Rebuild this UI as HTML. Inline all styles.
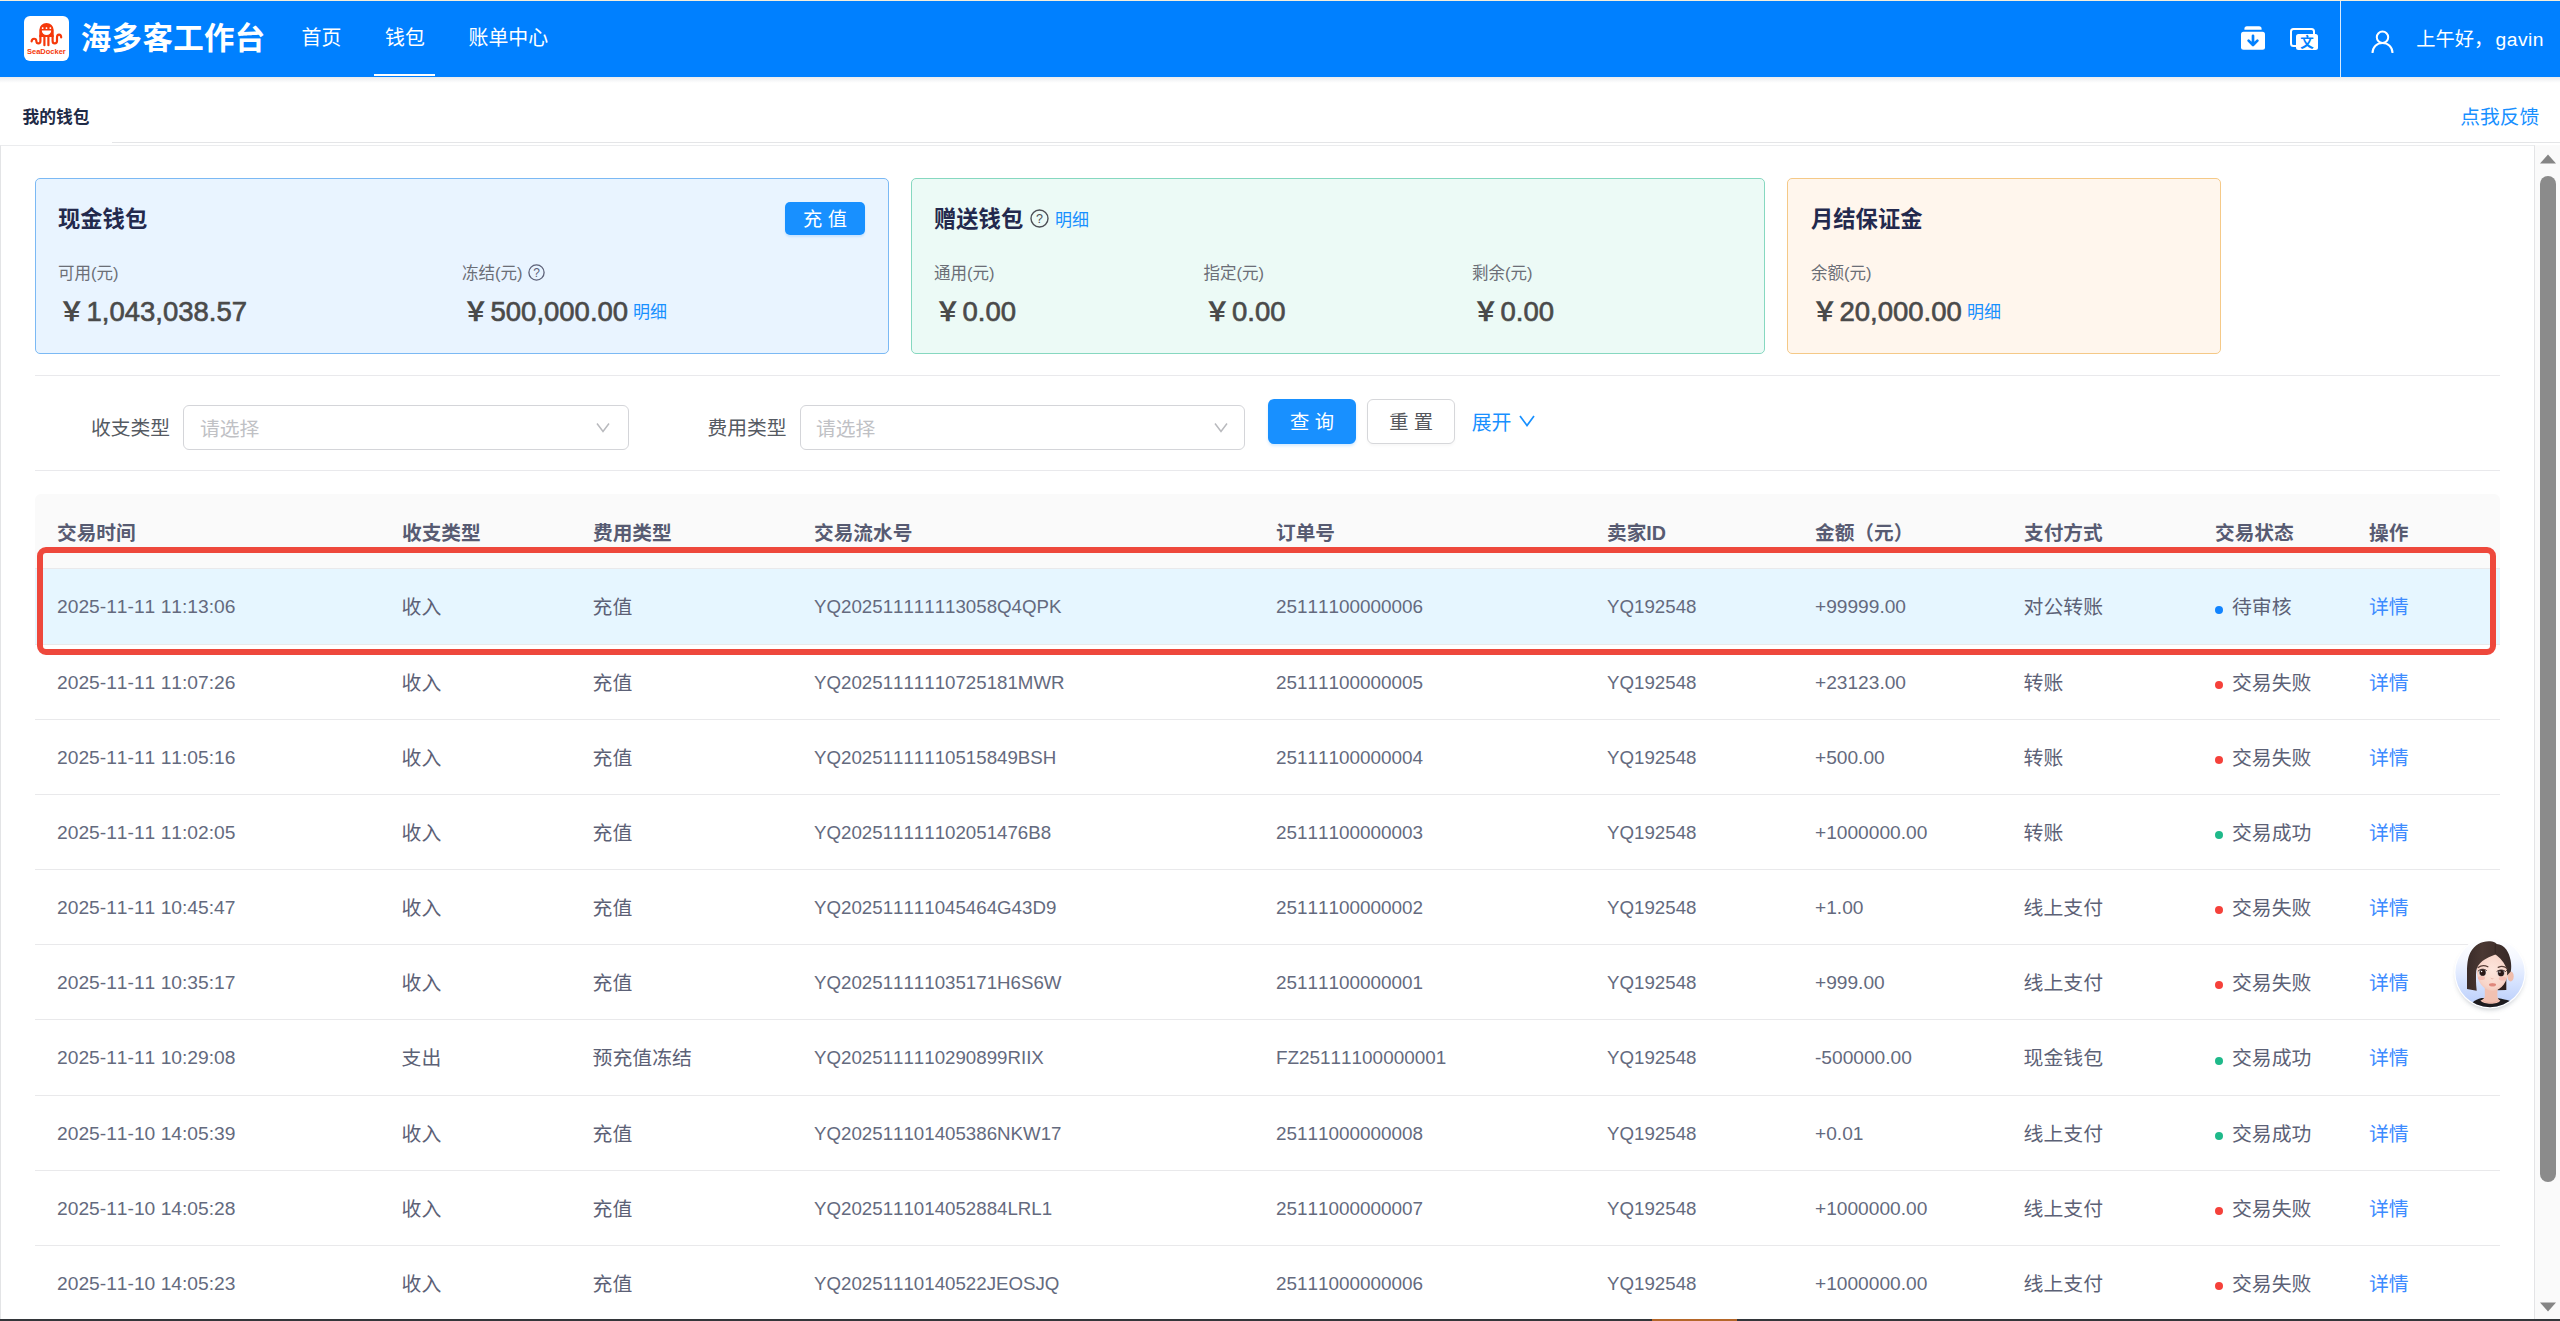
<!DOCTYPE html>
<html lang="zh-CN">
<head>
<meta charset="utf-8">
<title>海多客工作台 - 我的钱包</title>
<style>
html,body{margin:0;padding:0;width:2560px;height:1321px;overflow:hidden;background:#fff}
body{position:relative;font-family:"Liberation Sans","Noto Sans CJK SC",sans-serif;color:#5f6472;font-size:19.25px}
body div,body span{position:absolute;white-space:nowrap;box-sizing:border-box}
span.i{position:static}
svg{position:absolute;overflow:visible}
/* header */
.topstrip{left:0;top:0;width:2560px;height:1px;background:#f4eedc}
.hdr{left:0;top:1px;width:2560px;height:75.600px;background:#0080ff}
.hdrshadow{left:0;top:76.500px;width:2560px;height:6px;background:linear-gradient(#e9ebee,#ffffff)}
.logo{left:24px;top:16px;width:45px;height:45px;background:#fff;border-radius:6px}
.brand{left:80.800px;top:17.800px;height:40px;line-height:40px;font-size:30.500px;font-weight:bold;color:#fff;letter-spacing:0.300px}
.nav{top:22.800px;height:30px;line-height:30px;font-size:19.900px;color:#fff}
.navline{left:374px;top:73.5px;width:61px;height:2.5px;background:#fff}
.vdiv{left:2340px;top:1px;width:1.200px;height:75.500px;background:#d6e9fd}
.hello{left:2416.200px;top:25px;height:30px;line-height:30px;font-size:19.25px;color:#fff}
/* breadcrumb */
.crumb{left:22.500px;top:106px;height:24px;line-height:24px;font-size:16.750px;font-weight:bold;color:#1f2b47}
.fb{left:2460.300px;top:103px;height:28px;line-height:28px;font-size:19.750px;color:#1890ff}
.crumbline{left:112px;top:142px;width:2448px;height:1px;background:#e4e5e7}
.panel{left:0;top:144.500px;width:2535px;height:1176px;border-left:1.5px solid #e3e4e6;border-top:1px solid #ebecee;border-right:1px solid #e3e4e6}
/* cards */
.card{top:178px;height:176px;border-radius:5px;border:1.5px solid}
.c1{left:35px;width:854px;background:#e9f4ff;border-color:#7bb9f4}
.c2{left:911px;width:854px;background:#ecfaf6;border-color:#86d8c0}
.c3{left:1787px;width:434px;background:#fff6ed;border-color:#f5c987}
.ctitle{top:205.300px;height:30px;line-height:30px;font-size:22.300px;font-weight:bold;color:#23294d}
.clabel{top:261.300px;height:24px;line-height:24px;font-size:16.5px;color:#6b6e76}
.cval{top:292.800px;height:38px;line-height:38px;font-size:27.500px;color:#4a4a4a;font-weight:normal;-webkit-text-stroke:0.650px #4a4a4a}
span.y{font-weight:bold;-webkit-text-stroke:0;font-size:26.500px;letter-spacing:-0.500px;margin-left:-0.500px;margin-right:2px}
.mx{height:24px;line-height:24px;font-size:17px;color:#1890ff}
.btnr{left:785px;top:202px;width:80px;height:33px;line-height:35px;background:#1890ff;border-radius:5px;color:#fff;font-size:19.25px;text-align:center;box-shadow:0 2px 2px rgba(24,144,255,.15)}
/* filter */
.hline{left:35px;width:2465px;height:1.200px;background:#e9e9ec}
.flabel{top:413px;height:30px;line-height:30px;font-size:19.800px;color:#555a62}
.sel{top:405px;height:45px;width:446px;border:1.5px solid #d4d5d9;border-radius:6px;background:#fff}
.ph{top:413.500px;height:30px;line-height:30px;font-size:19.800px;color:#c0c1c5}
.bq{left:1268px;top:399px;width:88px;height:45px;line-height:47.400px;border-radius:6px;background:#1890ff;color:#fff;text-align:center;font-size:19.25px;box-shadow:0 2px 3px rgba(24,144,255,.18)}
.br{left:1366.800px;top:399px;width:88.700px;height:45px;line-height:46.600px;border-radius:6px;background:#fff;border:1.5px solid #d6d7da;color:#55575c;text-align:center;font-size:19.25px;box-shadow:0 2px 3px rgba(0,0,0,.03)}
.exp{left:1471.700px;top:408.200px;height:30px;line-height:30px;font-size:19.900px;color:#1890ff}
/* table */
.thead{left:35px;top:494px;width:2465px;height:74px;background:#fafafa;border-radius:6px 6px 0 0}
.th{top:517.600px;height:30px;line-height:30px;font-size:19.700px;font-weight:bold;color:#575b72}
.rline{left:35px;width:2465px;height:1px;background:#e9e9eb}
.rowhl{left:35px;width:2465px;background:#e6f6ff}
.td{height:30px;line-height:30px;font-size:19.850px;color:#5c6176}
.td.n{font-size:18.900px;font-kerning:none;color:#646a7e}
.td.k0{font-size:19.230px}
.td.k3{font-size:18.720px}
.td.k4{font-size:18.900px}
.td.k5{font-size:18.700px}
.td.k6{font-size:19.150px}
.lk{color:#3d8bff}
.dot{width:8px;height:8px;border-radius:50%}
.redbox{left:36.800px;top:547px;width:2459.100px;height:108.100px;border:6.200px solid #ee483c;border-radius:9px}
/* scrollbar */
.sbtrack{left:2535px;top:145px;width:25px;height:1176px;background:#fafafa}
.sbthumb{left:2540.200px;top:176px;width:15.800px;height:1006px;border-radius:8px;background:#8b8b8b}
.taskbar{left:0;top:1318.700px;width:2560px;height:2.300px;background:#33363a}
.taskhl{left:1652px;top:1318.700px;width:85px;height:2.300px;background:#b5672a}

</style>
</head>
<body>
<div class="hdrshadow"></div>
<div class="topstrip"></div>
<div class="hdr"></div>
<div class="logo"></div>
<svg style="left:24px;top:16px" width="45" height="45" viewBox="0 0 45 45">
<g fill="none" stroke="#f5380a" stroke-width="2.200" stroke-linecap="round" stroke-linejoin="round">
<path d="M20.400 20v9.200"/><path d="M24.400 20v9.200"/>
<path d="M16.400 19.500V25C16.400 28.200 12.600 28.200 12.400 25.200C12.200 22 8 21.800 7.600 25.400"/>
<path d="M28.600 19.500V25C28.600 28.200 32.900 28.200 33 25V21.500C33 17.700 37 17.700 37.200 21.400"/>
</g>
<path d="M15.300 21V14.100a7.100 7.100 0 0 1 14.400 0V21z" fill="#f5380a"/>
<path d="M17.800 14.400h9.400a4.700 4.700 0 0 1-9.400 0z" fill="#fff"/>
<rect x="17.800" y="11.300" width="1.700" height="1.700" rx="0.400" fill="#fff"/><rect x="21.650" y="11.300" width="1.700" height="1.700" rx="0.400" fill="#fff"/><rect x="25.500" y="11.300" width="1.700" height="1.700" rx="0.400" fill="#fff"/>
<text x="3" y="38" font-family="Liberation Sans, sans-serif" font-weight="bold" font-size="7.500" fill="#f5380a" textLength="38.800" lengthAdjust="spacingAndGlyphs">SeaDocker</text>
</svg>
<div class="brand">海多客工作台</div>
<div class="nav" style="left:301.500px">首页</div>
<div class="nav" style="left:385px">钱包</div>
<div class="nav" style="left:468.500px">账单中心</div>
<div class="navline"></div>
<!-- header right icons -->
<svg style="left:2241px;top:26px" width="24" height="24" viewBox="0 0 24 24">
<path d="M3.400 3.700V2.700a2.500 2.500 0 0 1 2.500-2.500h12.200a2.500 2.500 0 0 1 2.500 2.500V3.700z" fill="#fff"/>
<rect x="0" y="5.800" width="24" height="18" rx="2.500" fill="#fff"/>
<path d="M12 9.800v9M7.600 14.600l4.400 4.400 4.400-4.400" stroke="#0080ff" stroke-width="2.700" fill="none" stroke-linecap="round" stroke-linejoin="round"/>
</svg>
<svg style="left:2290px;top:28px" width="28" height="22" viewBox="0 0 28 22">
<rect x="1" y="1" width="23" height="17" rx="2.500" fill="none" stroke="#fff" stroke-width="2"/>
<rect x="6" y="6" width="22" height="16" rx="2.500" fill="#fff"/>
<text x="17" y="19.300" text-anchor="middle" font-family="Noto Sans CJK SC, sans-serif" font-weight="bold" font-size="13.500" fill="#0080ff">文</text>
</svg>
<div class="vdiv"></div>
<svg style="left:2371px;top:30px" width="23" height="24" viewBox="0 0 23 24">
<circle cx="11.500" cy="7.200" r="5.700" fill="none" stroke="#fff" stroke-width="2"/>
<path d="M1.500 23c0-6 4.500-10 10-10s10 4 10 10" fill="none" stroke="#fff" stroke-width="2"/>
</svg>
<div class="hello">上午好，<span class="i" style="margin-left:2.300px;letter-spacing:0.500px">gavin</span></div>
<!-- breadcrumb -->
<div class="crumb">我的钱包</div>
<div class="fb">点我反馈</div>
<div class="crumbline"></div>
<div class="panel"></div>
<!-- cards -->
<div class="card c1"></div>
<div class="card c2"></div>
<div class="card c3"></div>
<div class="ctitle" style="left:58px">现金钱包</div>
<div class="btnr">充 值</div>
<div class="clabel" style="left:58px">可用(元)</div>
<div class="clabel" style="left:462px">冻结(元)</div>
<svg style="left:527.800px;top:263.700px" width="17" height="17" viewBox="0 0 17 17"><circle cx="8.500" cy="8.500" r="7.600" fill="none" stroke="#5d6178" stroke-width="1.300"/><text x="8.500" y="12.800" text-anchor="middle" font-family="Liberation Sans, sans-serif" font-size="12" fill="#5d6178">?</text></svg>
<div class="cval" style="left:59px"><span class="i y">￥</span><span class="i v">1,043,038.57</span></div>
<div class="cval" style="left:463px"><span class="i y">￥</span><span class="i v">500,000.00</span></div>
<div class="mx" style="left:633px;top:301px">明细</div>
<div class="ctitle" style="left:934px">赠送钱包</div>
<svg style="left:1030px;top:208.600px" width="19" height="19" viewBox="0 0 19 19"><circle cx="9.500" cy="9.500" r="8.500" fill="none" stroke="#4d4f55" stroke-width="1.400"/><text x="9.500" y="14" text-anchor="middle" font-family="Liberation Sans, sans-serif" font-size="12.500" fill="#4d4f55">?</text></svg>
<div class="mx" style="left:1055px;top:208.500px">明细</div>
<div class="clabel" style="left:934px">通用(元)</div>
<div class="clabel" style="left:1203.500px">指定(元)</div>
<div class="clabel" style="left:1472px">剩余(元)</div>
<div class="cval" style="left:935px"><span class="i y">￥</span><span class="i v">0.00</span></div>
<div class="cval" style="left:1204.500px"><span class="i y">￥</span><span class="i v">0.00</span></div>
<div class="cval" style="left:1473px"><span class="i y">￥</span><span class="i v">0.00</span></div>
<div class="ctitle" style="left:1811px">月结保证金</div>
<div class="clabel" style="left:1811px">余额(元)</div>
<div class="cval" style="left:1812px"><span class="i y">￥</span><span class="i v">20,000.00</span></div>
<div class="mx" style="left:1967px;top:301px">明细</div>
<!-- filter -->
<div class="hline" style="top:375px"></div>
<div class="flabel" style="left:91px">收支类型</div>
<div class="sel" style="left:183px"></div>
<div class="ph" style="left:200px">请选择</div>
<svg style="left:596px;top:422px" width="14" height="11" viewBox="0 0 14 11"><path d="M1 1.500l6 8 6-8" fill="none" stroke="#b9babe" stroke-width="1.500"/></svg>
<div class="flabel" style="left:707.500px">费用类型</div>
<div class="sel" style="left:800.300px;width:444.700px"></div>
<div class="ph" style="left:816px">请选择</div>
<svg style="left:1213.500px;top:422px" width="14" height="11" viewBox="0 0 14 11"><path d="M1 1.500l6 8 6-8" fill="none" stroke="#b9babe" stroke-width="1.500"/></svg>
<div class="bq">查 询</div>
<div class="br">重 置</div>
<div class="exp">展开</div>
<svg style="left:1519px;top:415px" width="16" height="12" viewBox="0 0 16 12"><path d="M1 1l7 9.500 7-9.500" fill="none" stroke="#1890ff" stroke-width="1.700"/></svg>
<div class="hline" style="top:470px"></div>
<div class="thead"></div>
<div class="th" style="left:57px">交易时间</div>
<div class="th" style="left:402px">收支类型</div>
<div class="th" style="left:593px">费用类型</div>
<div class="th" style="left:814px">交易流水号</div>
<div class="th" style="left:1276px">订单号</div>
<div class="th" style="left:1607px">卖家ID</div>
<div class="th" style="left:1815px">金额（元）</div>
<div class="th" style="left:2024px">支付方式</div>
<div class="th" style="left:2215px">交易状态</div>
<div class="th" style="left:2369px">操作</div>
<div class="rowhl" style="top:569px;height:75px"></div>
<div class="rline" style="top:568px"></div>
<div class="td n k0" style="left:57px;top:592.4px">2025-11-11 11:13:06</div>
<div class="td c k1" style="left:401.6px;top:592.4px">收入</div>
<div class="td c k2" style="left:592.6px;top:592.4px">充值</div>
<div class="td n k3" style="left:814px;top:592.4px">YQ202511111113058Q4QPK</div>
<div class="td n k4" style="left:1276px;top:592.4px">25111100000006</div>
<div class="td n k5" style="left:1607px;top:592.4px">YQ192548</div>
<div class="td n k6" style="left:1815px;top:592.4px">+99999.00</div>
<div class="td c k7" style="left:2023.6px;top:592.4px">对公转账</div>
<div class="dot" style="left:2215px;top:605.7px;background:#1184ff"></div>
<div class="td c k8" style="left:2232px;top:592.4px">待审核</div>
<div class="td c lk" style="left:2369px;top:592.4px">详情</div>
<div class="rline" style="top:644px"></div>
<div class="td n k0" style="left:57px;top:667.9px">2025-11-11 11:07:26</div>
<div class="td c k1" style="left:401.6px;top:667.9px">收入</div>
<div class="td c k2" style="left:592.6px;top:667.9px">充值</div>
<div class="td n k3" style="left:814px;top:667.9px">YQ20251111110725181MWR</div>
<div class="td n k4" style="left:1276px;top:667.9px">25111100000005</div>
<div class="td n k5" style="left:1607px;top:667.9px">YQ192548</div>
<div class="td n k6" style="left:1815px;top:667.9px">+23123.00</div>
<div class="td c k7" style="left:2023.6px;top:667.9px">转账</div>
<div class="dot" style="left:2215px;top:681.2px;background:#f5413a"></div>
<div class="td c k8" style="left:2232px;top:667.9px">交易失败</div>
<div class="td c lk" style="left:2369px;top:667.9px">详情</div>
<div class="rline" style="top:719px"></div>
<div class="td n k0" style="left:57px;top:742.9px">2025-11-11 11:05:16</div>
<div class="td c k1" style="left:401.6px;top:742.9px">收入</div>
<div class="td c k2" style="left:592.6px;top:742.9px">充值</div>
<div class="td n k3" style="left:814px;top:742.9px">YQ20251111110515849BSH</div>
<div class="td n k4" style="left:1276px;top:742.9px">25111100000004</div>
<div class="td n k5" style="left:1607px;top:742.9px">YQ192548</div>
<div class="td n k6" style="left:1815px;top:742.9px">+500.00</div>
<div class="td c k7" style="left:2023.6px;top:742.9px">转账</div>
<div class="dot" style="left:2215px;top:756.2px;background:#f5413a"></div>
<div class="td c k8" style="left:2232px;top:742.9px">交易失败</div>
<div class="td c lk" style="left:2369px;top:742.9px">详情</div>
<div class="rline" style="top:794px"></div>
<div class="td n k0" style="left:57px;top:817.9px">2025-11-11 11:02:05</div>
<div class="td c k1" style="left:401.6px;top:817.9px">收入</div>
<div class="td c k2" style="left:592.6px;top:817.9px">充值</div>
<div class="td n k3" style="left:814px;top:817.9px">YQ202511111102051476B8</div>
<div class="td n k4" style="left:1276px;top:817.9px">25111100000003</div>
<div class="td n k5" style="left:1607px;top:817.9px">YQ192548</div>
<div class="td n k6" style="left:1815px;top:817.9px">+1000000.00</div>
<div class="td c k7" style="left:2023.6px;top:817.9px">转账</div>
<div class="dot" style="left:2215px;top:831.2px;background:#1fb98a"></div>
<div class="td c k8" style="left:2232px;top:817.9px">交易成功</div>
<div class="td c lk" style="left:2369px;top:817.9px">详情</div>
<div class="rline" style="top:869px"></div>
<div class="td n k0" style="left:57px;top:892.9px">2025-11-11 10:45:47</div>
<div class="td c k1" style="left:401.6px;top:892.9px">收入</div>
<div class="td c k2" style="left:592.6px;top:892.9px">充值</div>
<div class="td n k3" style="left:814px;top:892.9px">YQ202511111045464G43D9</div>
<div class="td n k4" style="left:1276px;top:892.9px">25111100000002</div>
<div class="td n k5" style="left:1607px;top:892.9px">YQ192548</div>
<div class="td n k6" style="left:1815px;top:892.9px">+1.00</div>
<div class="td c k7" style="left:2023.6px;top:892.9px">线上支付</div>
<div class="dot" style="left:2215px;top:906.2px;background:#f5413a"></div>
<div class="td c k8" style="left:2232px;top:892.9px">交易失败</div>
<div class="td c lk" style="left:2369px;top:892.9px">详情</div>
<div class="rline" style="top:944px"></div>
<div class="td n k0" style="left:57px;top:967.9px">2025-11-11 10:35:17</div>
<div class="td c k1" style="left:401.6px;top:967.9px">收入</div>
<div class="td c k2" style="left:592.6px;top:967.9px">充值</div>
<div class="td n k3" style="left:814px;top:967.9px">YQ202511111035171H6S6W</div>
<div class="td n k4" style="left:1276px;top:967.9px">25111100000001</div>
<div class="td n k5" style="left:1607px;top:967.9px">YQ192548</div>
<div class="td n k6" style="left:1815px;top:967.9px">+999.00</div>
<div class="td c k7" style="left:2023.6px;top:967.9px">线上支付</div>
<div class="dot" style="left:2215px;top:981.2px;background:#f5413a"></div>
<div class="td c k8" style="left:2232px;top:967.9px">交易失败</div>
<div class="td c lk" style="left:2369px;top:967.9px">详情</div>
<div class="rline" style="top:1019px"></div>
<div class="td n k0" style="left:57px;top:1043.4px">2025-11-11 10:29:08</div>
<div class="td c k1" style="left:401.6px;top:1043.4px">支出</div>
<div class="td c k2" style="left:592.6px;top:1043.4px">预充值冻结</div>
<div class="td n k3" style="left:814px;top:1043.4px">YQ2025111110290899RIIX</div>
<div class="td n k4" style="left:1276px;top:1043.4px">FZ25111100000001</div>
<div class="td n k5" style="left:1607px;top:1043.4px">YQ192548</div>
<div class="td n k6" style="left:1815px;top:1043.4px">-500000.00</div>
<div class="td c k7" style="left:2023.6px;top:1043.4px">现金钱包</div>
<div class="dot" style="left:2215px;top:1056.7px;background:#1fb98a"></div>
<div class="td c k8" style="left:2232px;top:1043.4px">交易成功</div>
<div class="td c lk" style="left:2369px;top:1043.4px">详情</div>
<div class="rline" style="top:1095px"></div>
<div class="td n k0" style="left:57px;top:1118.9px">2025-11-10 14:05:39</div>
<div class="td c k1" style="left:401.6px;top:1118.9px">收入</div>
<div class="td c k2" style="left:592.6px;top:1118.9px">充值</div>
<div class="td n k3" style="left:814px;top:1118.9px">YQ202511101405386NKW17</div>
<div class="td n k4" style="left:1276px;top:1118.9px">25111000000008</div>
<div class="td n k5" style="left:1607px;top:1118.9px">YQ192548</div>
<div class="td n k6" style="left:1815px;top:1118.9px">+0.01</div>
<div class="td c k7" style="left:2023.6px;top:1118.9px">线上支付</div>
<div class="dot" style="left:2215px;top:1132.2px;background:#1fb98a"></div>
<div class="td c k8" style="left:2232px;top:1118.9px">交易成功</div>
<div class="td c lk" style="left:2369px;top:1118.9px">详情</div>
<div class="rline" style="top:1170px"></div>
<div class="td n k0" style="left:57px;top:1193.9px">2025-11-10 14:05:28</div>
<div class="td c k1" style="left:401.6px;top:1193.9px">收入</div>
<div class="td c k2" style="left:592.6px;top:1193.9px">充值</div>
<div class="td n k3" style="left:814px;top:1193.9px">YQ2025111014052884LRL1</div>
<div class="td n k4" style="left:1276px;top:1193.9px">25111000000007</div>
<div class="td n k5" style="left:1607px;top:1193.9px">YQ192548</div>
<div class="td n k6" style="left:1815px;top:1193.9px">+1000000.00</div>
<div class="td c k7" style="left:2023.6px;top:1193.9px">线上支付</div>
<div class="dot" style="left:2215px;top:1207.2px;background:#f5413a"></div>
<div class="td c k8" style="left:2232px;top:1193.9px">交易失败</div>
<div class="td c lk" style="left:2369px;top:1193.9px">详情</div>
<div class="rline" style="top:1245px"></div>
<div class="td n k0" style="left:57px;top:1268.9px">2025-11-10 14:05:23</div>
<div class="td c k1" style="left:401.6px;top:1268.9px">收入</div>
<div class="td c k2" style="left:592.6px;top:1268.9px">充值</div>
<div class="td n k3" style="left:814px;top:1268.9px">YQ20251110140522JEOSJQ</div>
<div class="td n k4" style="left:1276px;top:1268.9px">25111000000006</div>
<div class="td n k5" style="left:1607px;top:1268.9px">YQ192548</div>
<div class="td n k6" style="left:1815px;top:1268.9px">+1000000.00</div>
<div class="td c k7" style="left:2023.6px;top:1268.9px">线上支付</div>
<div class="dot" style="left:2215px;top:1282.2px;background:#f5413a"></div>
<div class="td c k8" style="left:2232px;top:1268.9px">交易失败</div>
<div class="td c lk" style="left:2369px;top:1268.9px">详情</div>
<div class="redbox"></div>
<!-- floating assistant avatar -->
<svg style="left:2452px;top:935px" width="76" height="80" viewBox="0 0 76 80">
<defs>
<linearGradient id="avbg" x1="0" y1="0" x2="0" y2="1"><stop offset="0" stop-color="#ffffff"/><stop offset="0.300" stop-color="#f4f7ff"/><stop offset="0.600" stop-color="#d9e5ff"/><stop offset="1" stop-color="#b7ccfb"/></linearGradient>
<linearGradient id="avhair" x1="0" y1="0" x2="1" y2="0"><stop offset="0" stop-color="#3a2c29"/><stop offset="0.350" stop-color="#4a3833"/><stop offset="1" stop-color="#382a27"/></linearGradient>
<radialGradient id="avface" cx="0.500" cy="0.450" r="0.650"><stop offset="0" stop-color="#fde6dd"/><stop offset="0.700" stop-color="#f8d5c9"/><stop offset="1" stop-color="#eebcae"/></radialGradient>
<clipPath id="avclip"><circle cx="38" cy="37.600" r="34.600"/></clipPath>
<filter id="avsh" x="-30%" y="-30%" width="160%" height="170%"><feGaussianBlur stdDeviation="2.600"/></filter>
</defs>
<circle cx="38" cy="41" r="33.500" fill="#6f7a86" opacity="0.420" filter="url(#avsh)"/>
<circle cx="38" cy="37.600" r="35.800" fill="#fff"/>
<circle cx="38" cy="37.600" r="34.600" fill="url(#avbg)"/>
<g clip-path="url(#avclip)">
<path d="M45 30L54.300 30L54.300 55L45.500 55.300z" fill="#2d211f"/>
<path d="M20 68c3-3 6-4 9.500-5l17 0.300c4 0.700 8 1.500 11 2.500l2 9h-42z" fill="#1d1b1e"/>
<path d="M32.800 52h12.600v9.500c0.500 2.500 1.600 3.300 3 4-2.500 4.300-16.500 4.300-20 0 1.800-0.700 3.700-1.500 4.400-4z" fill="#f1c1b2"/>
<path d="M31 65.500c3.500 3 11.500 3 15.500 0" fill="none" stroke="#e2a596" stroke-width="0.500"/>
<ellipse cx="58.600" cy="41.400" rx="3.100" ry="5" fill="#f0bdac"/>
<path d="M24.800 36c0-10 7-17.500 16.500-17.500s15.200 7 14.800 18c-0.300 9-6 19.200-15.600 19.200s-15.700-10-15.700-19.700z" fill="url(#avface)"/>
<path d="M38.300 6.200c-8-0.500-15.500 3-19.800 11-3 5.800-3.500 13-3.500 20V54l9.700 1.800c-0.800-7-0.900-14-0.500-19.800 1.200-8 9-13 19.200-16.500 4.500 3 9.500 8.500 11.200 14.500 0.600 2.300 0.600 4.500 0.400 6.500l3.800-4c1.300-6.500-0.300-16-4.500-22-2.500-3.500-6-5.300-9.500-5.600-1.800-1.700-4-2.600-6.500-2.700z" fill="url(#avhair)"/>
<path d="M43.400 9.400c-0.300 3.500-0.200 7 0 10" fill="none" stroke="#2f2320" stroke-width="0.700"/>
<path d="M26.100 32.600c2.800-2.200 6.800-2.400 9.800-0.800M46.200 32.300c2.800-1.300 6.300-0.900 8.700 1" fill="none" stroke="#5a4039" stroke-width="1.300" stroke-linecap="round"/>
<ellipse cx="30.500" cy="37.500" rx="3.500" ry="3.300" fill="#9aa4ad"/>
<ellipse cx="49" cy="38" rx="3.500" ry="3.300" fill="#9aa4ad"/>
<ellipse cx="30.700" cy="37.700" rx="2.900" ry="3.100" fill="#2a1716"/>
<ellipse cx="49" cy="38.200" rx="2.900" ry="3.100" fill="#2a1716"/>
<circle cx="29.600" cy="36.500" r="0.700" fill="#fff"/><circle cx="47.900" cy="37" r="0.700" fill="#fff"/>
<path d="M26.200 36c1.800-2 5.500-2.600 8.200-0.600M45 36.300c2.500-1.800 6-1.700 8.500 0.200l1 -0.900" fill="none" stroke="#2a1b1a" stroke-width="0.900" stroke-linecap="round"/>
<ellipse cx="29.500" cy="43" rx="3.600" ry="2" fill="#f3a9a1" opacity="0.550"/>
<ellipse cx="50.500" cy="43.500" rx="3.600" ry="2" fill="#f3a9a1" opacity="0.550"/>
<path d="M39 43.200c0.400 0.600 1.200 0.800 2 0.500" fill="none" stroke="#e3a99b" stroke-width="0.700" stroke-linecap="round"/>
<ellipse cx="40.500" cy="49.800" rx="3.500" ry="1.800" fill="#e48f84"/>
<path d="M37.200 49.600c2 0.500 4.500 0.500 6.600 0" fill="none" stroke="#cf7468" stroke-width="0.500"/>
</g>
</svg>
<!-- scrollbar -->
<div class="sbtrack"></div>
<svg style="left:2540px;top:154px" width="16" height="10" viewBox="0 0 16 10"><path d="M0 9.500l8-9 8 9z" fill="#858585"/></svg>
<div class="sbthumb"></div>
<svg style="left:2540px;top:1302px" width="16" height="10" viewBox="0 0 16 10"><path d="M0 0.500l8 9 8-9z" fill="#858585"/></svg>
<div class="taskbar"></div>
<div class="taskhl"></div>
</body>
</html>
